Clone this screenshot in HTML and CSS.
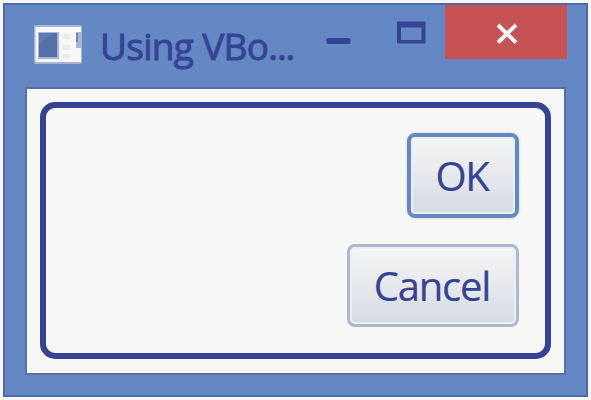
FILE: index.html
```
<!DOCTYPE html>
<html lang="en">
<head>
<meta charset="utf-8">
<title>Using VBox</title>
<link rel="stylesheet" href="styles.css">
</head>
<body>
<div class="window">
  <header class="titlebar">
    <svg class="app-icon" width="50" height="42" viewBox="0 0 50 42">
      <rect x="1" y="1" width="48" height="39" rx="2" fill="#a9b5d2"/>
      <rect x="2.5" y="3" width="45.5" height="35" fill="#f7f8f6"/>
      <rect x="5" y="8" width="21" height="27" fill="#a9b5d2"/>
      <rect x="6" y="9" width="18" height="24" fill="#556fa8"/>
      <path d="M6 9h16l-5 3-5 2-3 5-3 1z" fill="#5b7bb6"/>
      <path d="M30 10h7v5h-7zM30 21h7v5h-7zM30 30h7v4h-7z" fill="#e9ebef"/>
      <rect x="43" y="8" width="6" height="16" fill="#a9b5d2"/>
      <rect x="43" y="9" width="2" height="9" fill="#6388c3"/>
    </svg>
    <h1 class="title">Using VBo<span class="dots">...</span></h1>
    <div class="controls">
      <svg width="119" height="54" viewBox="0 0 119 54">
        <rect x="0.5" y="33" width="24" height="6" rx="1.500" fill="#364394"/>
        <path fill-rule="evenodd" d="M72 16.500h26.500q1 0 1 1v20q0 1-1 1H72q-1 0-1-1v-20q0-1 1-1zM75 22.500v12.500h20.500v-12.500z" fill="#364394"/>
      </svg>
      <svg class="close" width="122" height="54" viewBox="0 0 122 54">
        <path d="M53 20l18 17.500M71 20L53 37.500" stroke="#f7f8f6" stroke-width="4"/>
      </svg>
    </div>
  </header>
  <main class="content">
    <div class="vbox">
      <button class="button ok"><span>OK</span></button>
      <button class="button cancel"><span>Cancel</span></button>
    </div>
  </main>
</div>
</body>
</html>
```
FILE: styles.css
```
* { box-sizing: border-box; }
body {
  margin: 0;
  padding: 3px;
  height: 400px;
  background: #f7f8f6;
  overflow: hidden;
}
.window {
  width: 585px;
  height: 394px;
  background: #6388c3;
  border: 2px solid #5068a5;
  padding: 0 20px;
  font-family: "Open Sans", "Noto Sans", sans-serif;
  color: #364394;
}
.titlebar {
  height: 82px;
  display: flex;
  align-items: flex-start;
  padding-left: 8px;
}
.app-icon { margin-top: 19px; flex: none; }
.title {
  flex: none;
  margin: 14px 0 0 17px;
  width: 226px;
  font-size: 37px;
  line-height: 54px;
  font-weight: 400;
  letter-spacing: -0.7px;
  white-space: nowrap;
  -webkit-text-stroke: 0.9px #364394;
}
.dots { letter-spacing: -1.1px; }
.controls { display: flex; flex: none; }
.controls svg { display: block; }
.close { background: #c55353; }
.content {
  width: 541px;
  height: 288px;
  border: 2px solid #5570ac;
  background: #f7f8f6;
  padding: 13px;
}
.vbox {
  height: 257px;
  width: 511px;
  border: 6px solid #364394;
  border-radius: 15px;
  display: flex;
  flex-direction: column;
  align-items: flex-end;
  gap: 26px;
  padding: 25px 26px 0 0;
}
.button {
  font: inherit;
  font-size: 40px;
  color: #364394;
  padding: 0;
  display: flex;
  align-items: center;
  justify-content: center;
  background: linear-gradient(#f5f6f6, #e8eaed 45%, #d5dae2);
  border-radius: 8px;
  -webkit-text-stroke: 0.2px #364394;
}
.button span { margin-right: 2px; letter-spacing: -1.2px; }
.ok {
  width: 112px;
  height: 85px;
  border: 4px solid #6388c3;
  box-shadow: inset 0 0 0 2px #eceff2, 0 0 2px 1px #dfe4ec;
}
.cancel {
  width: 172px;
  height: 83px;
  border: 3px solid #adb9d2;
  box-shadow: inset 0 0 0 2px #eceff2;
}
```
